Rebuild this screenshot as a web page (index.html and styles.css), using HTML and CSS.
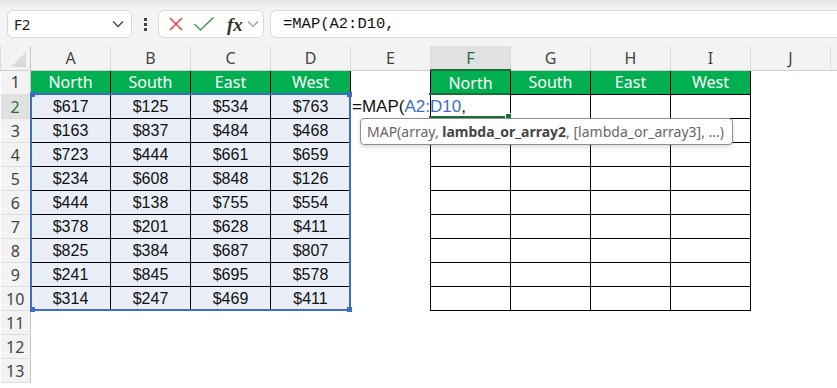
FILE: index.html
```html
<!DOCTYPE html>
<html lang="en">
<head>
    <meta charset="UTF-8">
    <title>MAP formula</title>
    <link rel="stylesheet" href="styles.css">
</head>
<body>
    <div class="formula-bar">
        <div class="name-box">
            <span>F2</span>
            <svg class="chev" width="12" height="8" viewBox="0 0 12 8"><polyline points="1,1.5 6,6.5 11,1.5" fill="none" stroke="#444" stroke-width="1.3"/></svg>
        </div>
        <div class="dots"><i></i><i></i><i></i></div>
        <div class="func-box">
            <svg width="16" height="16" viewBox="0 0 16 16"><path d="M2 2 L14 14 M14 2 L2 14" stroke="#e5484d" stroke-width="1.6" fill="none"/></svg>
            <svg width="22" height="16" viewBox="0 0 22 16"><polyline points="1.5,8 7.5,14 20.5,1.5" stroke="#3e9d51" stroke-width="1.6" fill="none"/></svg>
            <span class="fx">fx</span>
            <svg class="chev small" width="12" height="8" viewBox="0 0 12 8"><polyline points="1,1.5 6,6.5 11,1.5" fill="none" stroke="#999" stroke-width="1.2"/></svg>
        </div>
        <div class="formula-input">=MAP(A2:D10,</div>
    </div>

    <div class="sheet">
        <table class="grid">
            <colgroup>
                <col class="c-rh">
                <col><col><col><col><col><col><col><col><col><col>
                <col class="c-end">
            </colgroup>
            <tr class="col-heads">
                <td class="corner"><span class="tri"></span></td>
                <td class="ch">A</td><td class="ch">B</td><td class="ch">C</td><td class="ch">D</td>
                <td class="ch">E</td><td class="ch active">F</td><td class="ch">G</td><td class="ch">H</td>
                <td class="ch">I</td><td class="ch">J</td><td class="ch"></td>
            </tr>
            <tr>
                <td class="rh">1</td>
                <td class="hd">North</td><td class="hd">South</td><td class="hd">East</td><td class="hd">West</td>
                <td></td>
                <td class="hd">North</td><td class="hd">South</td><td class="hd">East</td><td class="hd">West</td>
                <td></td><td></td>
            </tr>
            <tr>
                <td class="rh active">2</td>
                <td class="num">$617</td><td class="num">$125</td><td class="num">$534</td><td class="num">$763</td>
                <td class="edit">=MAP(<span class="ref">A2:D10</span>,</td>
                <td class="box"></td><td class="box"></td><td class="box"></td><td class="box"></td>
                <td></td><td></td>
            </tr>
            <tr>
                <td class="rh">3</td>
                <td class="num">$163</td><td class="num">$837</td><td class="num">$484</td><td class="num">$468</td>
                <td></td>
                <td class="box"></td><td class="box"></td><td class="box"></td><td class="box"></td>
                <td></td><td></td>
            </tr>
            <tr>
                <td class="rh">4</td>
                <td class="num">$723</td><td class="num">$444</td><td class="num">$661</td><td class="num">$659</td>
                <td></td>
                <td class="box"></td><td class="box"></td><td class="box"></td><td class="box"></td>
                <td></td><td></td>
            </tr>
            <tr>
                <td class="rh">5</td>
                <td class="num">$234</td><td class="num">$608</td><td class="num">$848</td><td class="num">$126</td>
                <td></td>
                <td class="box"></td><td class="box"></td><td class="box"></td><td class="box"></td>
                <td></td><td></td>
            </tr>
            <tr>
                <td class="rh">6</td>
                <td class="num">$444</td><td class="num">$138</td><td class="num">$755</td><td class="num">$554</td>
                <td></td>
                <td class="box"></td><td class="box"></td><td class="box"></td><td class="box"></td>
                <td></td><td></td>
            </tr>
            <tr>
                <td class="rh">7</td>
                <td class="num">$378</td><td class="num">$201</td><td class="num">$628</td><td class="num">$411</td>
                <td></td>
                <td class="box"></td><td class="box"></td><td class="box"></td><td class="box"></td>
                <td></td><td></td>
            </tr>
            <tr>
                <td class="rh">8</td>
                <td class="num">$825</td><td class="num">$384</td><td class="num">$687</td><td class="num">$807</td>
                <td></td>
                <td class="box"></td><td class="box"></td><td class="box"></td><td class="box"></td>
                <td></td><td></td>
            </tr>
            <tr>
                <td class="rh">9</td>
                <td class="num">$241</td><td class="num">$845</td><td class="num">$695</td><td class="num">$578</td>
                <td></td>
                <td class="box"></td><td class="box"></td><td class="box"></td><td class="box"></td>
                <td></td><td></td>
            </tr>
            <tr>
                <td class="rh">10</td>
                <td class="num">$314</td><td class="num">$247</td><td class="num">$469</td><td class="num">$411</td>
                <td></td>
                <td class="box"></td><td class="box"></td><td class="box"></td><td class="box"></td>
                <td></td><td></td>
            </tr>
            <tr><td class="rh">11</td><td></td><td></td><td></td><td></td><td></td><td></td><td></td><td></td><td></td><td></td><td></td></tr>
            <tr><td class="rh">12</td><td></td><td></td><td></td><td></td><td></td><td></td><td></td><td></td><td></td><td></td><td></td></tr>
            <tr><td class="rh">13</td><td></td><td></td><td></td><td></td><td></td><td></td><td></td><td></td><td></td><td></td><td></td></tr>
        </table>

        <!-- range picked in the formula -->
        <div class="range-sel">
            <i class="h tl"></i><i class="h tr"></i><i class="h bl"></i><i class="h br"></i>
        </div>
        <!-- active cell F2 -->
        <div class="active-cell"><i class="h br"></i></div>

        <div class="tooltip">MAP(array, <b>lambda_or_array2</b>, [lambda_or_array3], ...)</div>
    </div>
</body>
</html>
```

FILE: styles.css
```css
body {
    margin: 0;
    width: 837px;
    height: 388px;
    overflow: hidden;
    background: #fff;
    font-family: "Noto Sans", "Open Sans", sans-serif;
}

/* formula bar */
.formula-bar {
    height: 46px;
    box-sizing: border-box;
    padding-top: 10px;
    display: flex;
    align-items: flex-start;
    background: linear-gradient(#e4e4e4 0, #f3f3f3 8px, #f4f4f4 100%);
}

.name-box {
    margin-left: 7px;
    width: 125px;
    height: 28px;
    box-sizing: border-box;
    border: 1px solid #d9d9d9;
    border-radius: 6px;
    background: #fff;
    display: flex;
    align-items: center;
    justify-content: space-between;
    padding: 0 7px 0 6px;
    font-size: 15px;
    color: #222;
}

.dots {
    width: 26px;
    height: 28px;
    display: flex;
    flex-direction: column;
    align-items: center;
    justify-content: center;
    gap: 2px;
}

.dots i {
    width: 3px;
    height: 3px;
    background: #444;
}

.func-box {
    width: 106px;
    height: 28px;
    box-sizing: border-box;
    border: 1px solid #d9d9d9;
    border-radius: 6px;
    background: #fff;
    display: flex;
    align-items: center;
    padding-left: 9px;
    gap: 9px;
}

.fx {
    font-family: "Liberation Serif", "DejaVu Serif", serif;
    font-style: italic;
    font-weight: bold;
    font-size: 19px;
    color: #333;
    margin-left: 3px;
    margin-right: -5px;
    line-height: 1;
}

.formula-input {
    margin-left: 6px;
    flex: 1;
    height: 28px;
    box-sizing: border-box;
    border: 1px solid #d9d9d9;
    border-right: 0;
    border-radius: 6px 0 0 6px;
    background: #fff;
    padding-left: 12px;
    font-family: "Liberation Mono", "DejaVu Sans Mono", monospace;
    font-size: 15.5px;
    line-height: 26px;
    color: #111;
}

/* sheet */
.sheet {
    position: relative;
    width: 837px;
    overflow: hidden;
}

.grid {
    border-collapse: collapse;
    table-layout: fixed;
    width: 837px;
}

.grid col {
    width: 80px;
}

.grid col.c-rh {
    width: 30px;
}

.grid col.c-end {
    width: 7px;
}

.grid tr {
    height: 24px;
}

.grid td {
    padding: 0;
    height: 23px;
    text-align: center;
    white-space: nowrap;
    font-size: 16px;
}

.col-heads td {
    background: #f3f3f3;
    color: #444;
    border-left: 1px solid #dcdcdc;
    border-bottom: 1px solid #cfcfcf;
}

.corner {
    position: relative;
    border-right: 1px solid #c8c8c8;
}

.tri {
    position: absolute;
    right: 4px;
    bottom: 3px;
    width: 0;
    height: 0;
    border-left: 15px solid transparent;
    border-bottom: 15px solid #dadada;
}

.ch.active {
    background: #e1e1e1;
    color: #1e6e3c;
    border-bottom: 2px solid #1e6e3c;
}

.rh {
    background: #f3f3f3;
    color: #444;
    border-right: 1px solid #c8c8c8;
    border-bottom: 1px solid #dedede;
}

.rh.active {
    background: #e1e1e1;
    color: #1e6e3c;
    border-right: 2px solid #1e6e3c;
}

.hd {
    background: #00b050;
    color: #fff;
    border-left: 1px solid #000;
    border-right: 1px solid #000;
    border-bottom: 1px solid #000;
}

.num {
    background: #e9eef7;
    color: #111;
    border: 1px solid #000;
    font-family: "Liberation Sans", Arial, sans-serif;
}

.box {
    border: 1px solid #000;
}

.edit {
    text-align: left !important;
    padding-left: 1px !important;
    font-family: "Liberation Sans", Arial, sans-serif;
    font-size: 17px !important;
    color: #111;
    overflow: visible;
}

.edit .ref {
    color: #3b6fc6;
}

/* overlays */
.range-sel {
    position: absolute;
    left: 30px;
    top: 47px;
    width: 321px;
    height: 218px;
    box-sizing: border-box;
    border: 2px solid #3a6fc4;
}

.h {
    position: absolute;
    width: 5px;
    height: 5px;
    background: #3a6fc4;
}

.range-sel .tl { left: -2px; top: -3px; }
.range-sel .tr { right: -3px; top: -3px; }
.range-sel .bl { left: -2px; bottom: -3px; }
.range-sel .br { right: -3px; bottom: -3px; }

.active-cell {
    position: absolute;
    left: 429px;
    top: 47px;
    width: 81px;
    height: 25px;
    box-sizing: border-box;
    border-top: 2px solid #1e6e3c;
    border-bottom: 2px solid #1e6e3c;
}

.active-cell .br {
    right: -2px;
    bottom: -4px;
    background: #1e6e3c;
    border: 1px solid #fff;
}

.tooltip {
    position: absolute;
    left: 360px;
    top: 72px;
    width: 373px;
    height: 27px;
    box-sizing: border-box;
    border: 1px solid #8f8f8f;
    border-radius: 4px;
    background: #fff;
    box-shadow: 0 2px 4px rgba(0, 0, 0, 0.15);
    padding-left: 6px;
    font-size: 14px;
    line-height: 25px;
    color: #666;
    white-space: nowrap;
}

.tooltip b {
    color: #444;
}
```
